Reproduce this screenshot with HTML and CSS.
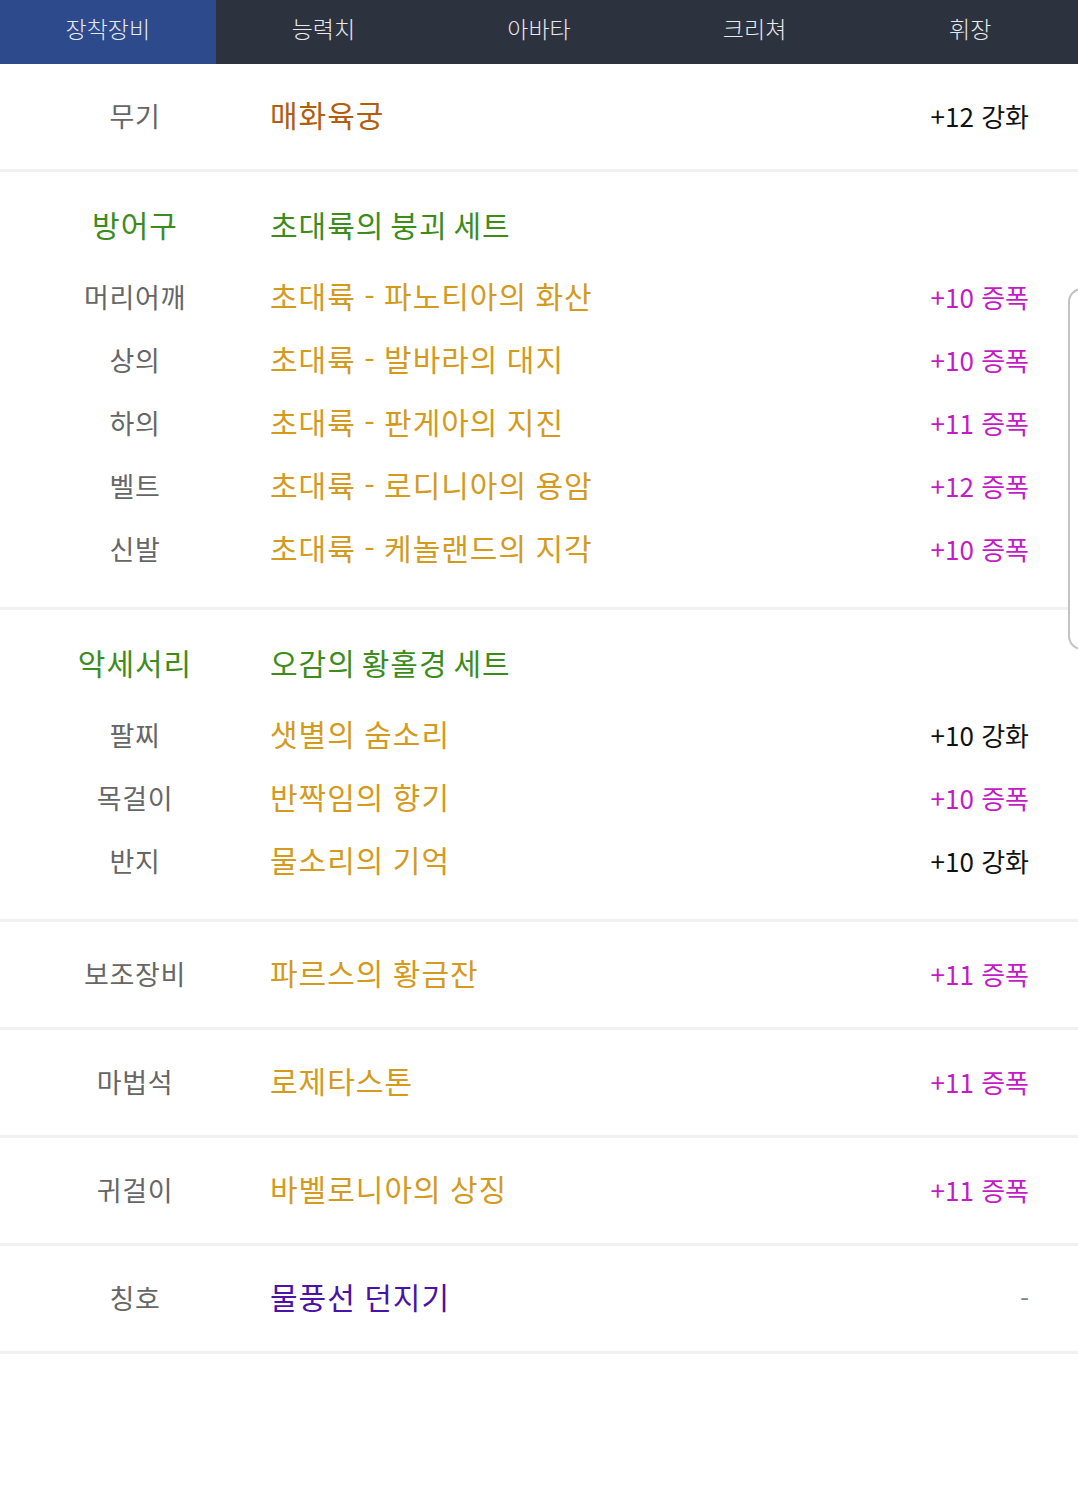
FILE: index.html
```html
<!DOCTYPE html>
<html lang="ko">
<head>
<meta charset="utf-8">
<title>장착장비</title>
<link rel="stylesheet" href="styles.css">
</head>
<body>
<nav class="tabs">
  <div class="tab active">장착장비</div>
  <div class="tab">능력치</div>
  <div class="tab">아바타</div>
  <div class="tab">크리쳐</div>
  <div class="tab">휘장</div>
</nav>
<main class="equip">
  <section class="block single">
    <div class="row">
      <span class="label">무기</span>
      <span class="name weapon">매화육궁</span>
      <span class="val enh">+12 강화</span>
    </div>
  </section>

  <section class="block group">
    <div class="row head">
      <span class="label set">방어구</span>
      <span class="name set">초대륙의 붕괴 세트</span>
      <span class="val"></span>
    </div>
    <div class="row">
      <span class="label">머리어깨</span>
      <span class="name">초대륙 - 파노티아의 화산</span>
      <span class="val amp">+10 증폭</span>
    </div>
    <div class="row">
      <span class="label">상의</span>
      <span class="name">초대륙 - 발바라의 대지</span>
      <span class="val amp">+10 증폭</span>
    </div>
    <div class="row">
      <span class="label">하의</span>
      <span class="name">초대륙 - 판게아의 지진</span>
      <span class="val amp">+11 증폭</span>
    </div>
    <div class="row">
      <span class="label">벨트</span>
      <span class="name">초대륙 - 로디니아의 용암</span>
      <span class="val amp">+12 증폭</span>
    </div>
    <div class="row">
      <span class="label">신발</span>
      <span class="name">초대륙 - 케놀랜드의 지각</span>
      <span class="val amp">+10 증폭</span>
    </div>
  </section>

  <section class="block group">
    <div class="row head">
      <span class="label set">악세서리</span>
      <span class="name set">오감의 황홀경 세트</span>
      <span class="val"></span>
    </div>
    <div class="row">
      <span class="label">팔찌</span>
      <span class="name">샛별의 숨소리</span>
      <span class="val enh">+10 강화</span>
    </div>
    <div class="row">
      <span class="label">목걸이</span>
      <span class="name">반짝임의 향기</span>
      <span class="val amp">+10 증폭</span>
    </div>
    <div class="row">
      <span class="label">반지</span>
      <span class="name">물소리의 기억</span>
      <span class="val enh">+10 강화</span>
    </div>
  </section>

  <section class="block single">
    <div class="row">
      <span class="label">보조장비</span>
      <span class="name">파르스의 황금잔</span>
      <span class="val amp">+11 증폭</span>
    </div>
  </section>

  <section class="block single">
    <div class="row">
      <span class="label">마법석</span>
      <span class="name">로제타스톤</span>
      <span class="val amp">+11 증폭</span>
    </div>
  </section>

  <section class="block single">
    <div class="row">
      <span class="label">귀걸이</span>
      <span class="name">바벨로니아의 상징</span>
      <span class="val amp">+11 증폭</span>
    </div>
  </section>

  <section class="block single">
    <div class="row">
      <span class="label">칭호</span>
      <span class="name title">물풍선 던지기</span>
      <span class="val none">-</span>
    </div>
  </section>
</main>
<div class="side-handle"></div>
</body>
</html>
```

FILE: styles.css
```css
* {
  box-sizing: border-box;
}

html, body {
  margin: 0;
  padding: 0;
  background: #ffffff;
}

body {
  font-family: "Noto Sans CJK KR", "Noto Sans", sans-serif;
  width: 1078px;
  min-height: 1502px;
  position: relative;
  overflow: hidden;
}

.tabs {
  display: flex;
  height: 64px;
  background: #2d323f;
}

.tab {
  flex: 1;
  display: flex;
  align-items: center;
  justify-content: center;
  color: #e8e9ec;
  font-size: 23px;
  font-weight: 300;
  line-height: 1;
  padding-bottom: 8px;
}

.tab.active {
  background: #2c4a8c;
}

.block {
  border-bottom: 3px solid #f1f1f1;
}

.block.single {
  height: 108px;
  display: flex;
  flex-direction: column;
  justify-content: center;
}

.block.group {
  padding: 23px 0 26px;
}

.row {
  display: grid;
  grid-template-columns: 270px 1fr auto;
  align-items: center;
  height: 63px;
  padding-right: 49px;
  line-height: 1;
}

.row.head {
  margin-bottom: 8px;
}

.label {
  text-align: center;
  font-size: 27px;
  letter-spacing: 0.7px;
  color: #666666;
  padding-bottom: 3px;
}

.label.set {
  color: #3c8c1c;
  font-size: 30px;
  letter-spacing: 1px;
  padding-bottom: 5px;
}

.name {
  font-size: 30px;
  letter-spacing: 1px;
  word-spacing: -1px;
  color: #d39a1e;
  padding-bottom: 5px;
}

.name.set {
  color: #3c8c1c;
  word-spacing: -3.5px;
}

.name.weapon {
  color: #b35d0e;
}

.name.title {
  color: #4a12a6;
}

.val {
  font-size: 26px;
  text-align: right;
  padding-bottom: 1px;
}

.val.enh {
  color: #111111;
}

.val.amp {
  color: #c41bc6;
}

.val.none {
  color: #888888;
  font-size: 26px;
}

.side-handle {
  position: absolute;
  left: 1068px;
  top: 288px;
  width: 40px;
  height: 362px;
  border: 2px solid #c3c3c3;
  border-radius: 14px;
  background: #ffffff;
}
```
